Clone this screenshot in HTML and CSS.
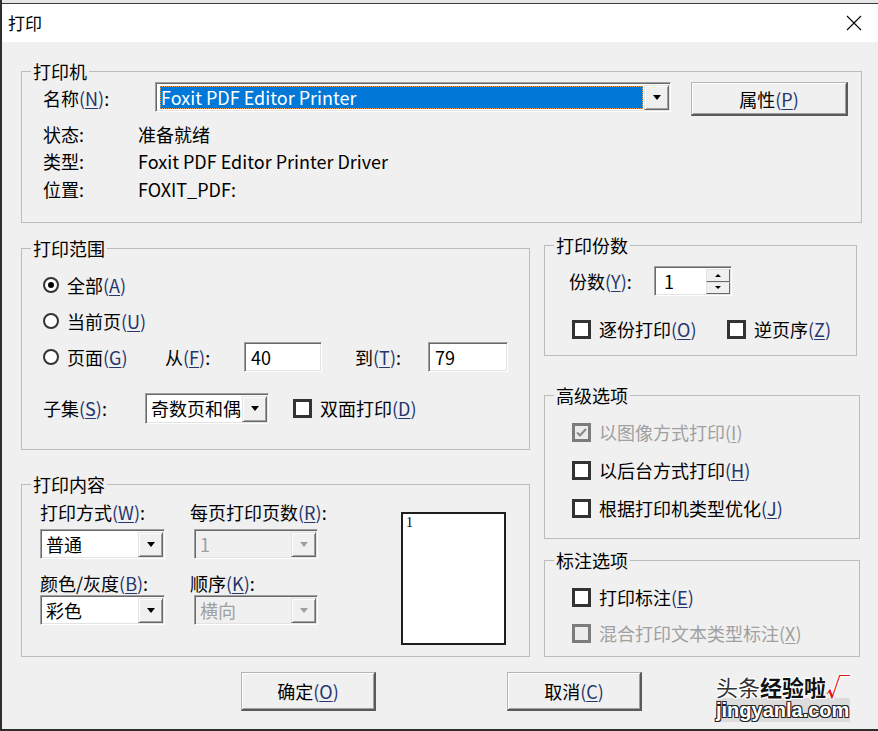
FILE: index.html
```html
<!DOCTYPE html>
<html lang="zh-CN">
<head>
    <meta charset="UTF-8">
    <title>打印</title>
    <link rel="stylesheet" href="styles.css">
</head>
<body>
<div class="window">
    <div class="top-strip"></div>
    <div class="title-bar">
        <span class="title">打印</span>
        <svg class="close" width="16" height="16" viewBox="0 0 16 16"><path d="M1 1L15 15M15 1L1 15" stroke="#000" stroke-width="1.1" fill="none"/></svg>
    </div>

    <div class="dialog">
        <fieldset class="group printer-group">
            <legend>打印机</legend>
            <div class="printer-body">
                <div class="name-row">
                    <span class="name-label">名称<span class="key">(<u>N</u>)</span>:</span>
                    <div class="combo printer-combo">
                        <span class="combo-value selected">Foxit PDF Editor Printer</span>
                        <span class="drop-btn"><i class="arrow"></i></span>
                    </div>
                    <button class="btn props-btn">属性<span class="key">(<u>P</u>)</span></button>
                </div>
                <div class="info">
                    <span>状态:</span><span>准备就绪</span>
                    <span>类型:</span><span>Foxit PDF Editor Printer Driver</span>
                    <span>位置:</span><span>FOXIT_PDF:</span>
                </div>
            </div>
        </fieldset>

        <div class="middle">
            <div class="left-col">
                <fieldset class="group range-group">
                    <legend>打印范围</legend>
                    <div class="range-body">
                        <div class="opt-row">
                            <span class="radio checked"></span>
                            <span>全部<span class="key">(<u>A</u>)</span></span>
                        </div>
                        <div class="opt-row">
                            <span class="radio"></span>
                            <span>当前页<span class="key">(<u>U</u>)</span></span>
                        </div>
                        <div class="opt-row pages-row">
                            <span class="pages-opt">
                                <span class="radio"></span>
                                <span>页面<span class="key">(<u>G</u>)</span></span>
                            </span>
                            <span class="from-label">从<span class="key">(<u>F</u>)</span>:</span>
                            <span class="text-box from-box">40</span>
                            <span class="to-label">到<span class="key">(<u>T</u>)</span>:</span>
                            <span class="text-box to-box">79</span>
                        </div>
                        <div class="subset-row">
                            <span class="subset-label">子集<span class="key">(<u>S</u>)</span>:</span>
                            <div class="combo subset-combo">
                                <span class="combo-value">奇数页和偶</span>
                                <span class="drop-btn"><i class="arrow"></i></span>
                            </div>
                            <span class="check-item duplex">
                                <span class="check"></span>
                                <span>双面打印<span class="key">(<u>D</u>)</span></span>
                            </span>
                        </div>
                    </div>
                </fieldset>

                <fieldset class="group content-group">
                    <legend>打印内容</legend>
                    <div class="content-body">
                        <div class="field-col mode-col">
                            <span class="field-label">打印方式<span class="key">(<u>W</u>)</span>:</span>
                            <div class="combo field-combo">
                                <span class="combo-value">普通</span>
                                <span class="drop-btn"><i class="arrow"></i></span>
                            </div>
                            <span class="field-label second">颜色/灰度<span class="key">(<u>B</u>)</span>:</span>
                            <div class="combo field-combo second">
                                <span class="combo-value">彩色</span>
                                <span class="drop-btn"><i class="arrow"></i></span>
                            </div>
                        </div>
                        <div class="field-col pages-col">
                            <span class="field-label">每页打印页数<span class="key">(<u>R</u>)</span>:</span>
                            <div class="combo field-combo disabled">
                                <span class="combo-value">1</span>
                                <span class="drop-btn"><i class="arrow"></i></span>
                            </div>
                            <span class="field-label second">顺序<span class="key">(<u>K</u>)</span>:</span>
                            <div class="combo field-combo second disabled">
                                <span class="combo-value">横向</span>
                                <span class="drop-btn"><i class="arrow"></i></span>
                            </div>
                        </div>
                        <div class="preview">1</div>
                    </div>
                </fieldset>
            </div>

            <div class="right-col">
                <fieldset class="group copies-group">
                    <legend>打印份数</legend>
                    <div class="copies-body">
                        <div class="copies-row">
                            <span class="copies-label">份数<span class="key">(<u>Y</u>)</span>:</span>
                            <div class="spinner">
                                <span class="spin-value">1</span>
                                <span class="spin-btns">
                                    <span class="spin-btn"><i class="arrow small up"></i></span>
                                    <span class="spin-btn"><i class="arrow small"></i></span>
                                </span>
                            </div>
                        </div>
                        <div class="copies-checks">
                            <span class="check-item collate">
                                <span class="check"></span>
                                <span>逐份打印<span class="key">(<u>O</u>)</span></span>
                            </span>
                            <span class="check-item">
                                <span class="check"></span>
                                <span>逆页序<span class="key">(<u>Z</u>)</span></span>
                            </span>
                        </div>
                    </div>
                </fieldset>

                <fieldset class="group advanced-group">
                    <legend>高级选项</legend>
                    <div class="list-body advanced-body">
                        <div class="check-item disabled">
                            <span class="check">
                                <svg width="13" height="13" viewBox="0 0 13 13"><path d="M2 6.5L5 9.5L11 3" stroke="#8a8a8a" stroke-width="2.2" fill="none"/></svg>
                            </span>
                            <span>以图像方式打印<span class="key">(<u>I</u>)</span></span>
                        </div>
                        <div class="check-item">
                            <span class="check"></span>
                            <span>以后台方式打印<span class="key">(<u>H</u>)</span></span>
                        </div>
                        <div class="check-item">
                            <span class="check"></span>
                            <span>根据打印机类型优化<span class="key">(<u>J</u>)</span></span>
                        </div>
                    </div>
                </fieldset>

                <fieldset class="group notes-group">
                    <legend>标注选项</legend>
                    <div class="list-body notes-body">
                        <div class="check-item">
                            <span class="check"></span>
                            <span>打印标注<span class="key">(<u>E</u>)</span></span>
                        </div>
                        <div class="check-item disabled">
                            <span class="check"></span>
                            <span>混合打印文本类型标注<span class="key">(<u>X</u>)</span></span>
                        </div>
                    </div>
                </fieldset>
            </div>
        </div>

        <div class="actions">
            <button class="btn action-btn">确定<span class="key">(<u>O</u>)</span></button>
            <button class="btn action-btn">取消<span class="key">(<u>C</u>)</span></button>
        </div>
    </div>

    <!-- watermark over the corner -->
    <div class="watermark">
        <div class="wm-top"><span class="wm-light">头条</span>经验啦<span class="wm-tick">√</span></div>
        <div class="wm-site">jingyanla.com</div>
    </div>
</div>
</body>
</html>
```

FILE: styles.css
```css
* {
    box-sizing: border-box;
    margin: 0;
    padding: 0;
}

body {
    width: 878px;
    height: 731px;
    overflow: hidden;
    background: #f0f0f0;
    font-family: "Noto Sans CJK SC", sans-serif;
    font-size: 18px;
    line-height: 24px;
    color: #000;
}

button {
    font: inherit;
    color: inherit;
}

u {
    text-underline-offset: 2px;
}

.key {
    color: #26366e;
}

.window {
    position: relative;
    height: 731px;
    border-left: 2px solid #2d2d2d;
    border-bottom: 2px solid #2d2d2d;
}

.top-strip {
    height: 4px;
    background: #e6e6e6;
    border-bottom: 1px solid #3a3a3a;
}

.title-bar {
    height: 38px;
    background: #fff;
    display: flex;
    align-items: center;
    justify-content: space-between;
    padding: 0 16px 0 6px;
}

.title {
    font-size: 17px;
}

.dialog {
    padding: 17px 0 0 19px;
}

/* group boxes */
.group {
    border: 1px solid #bcbcbc;
    padding: 0;
    margin: 0;
    min-width: 0;
}

.group legend {
    margin-left: 9px;
    padding: 0 2px;
    line-height: 24px;
}

.printer-group {
    width: 841px;
    height: 164px;
}

.printer-body {
    padding-left: 21px;
}

.name-row {
    display: flex;
    align-items: flex-start;
    margin-top: -1px;
}

.name-label {
    width: 112px;
    margin-top: 4px;
}

.info {
    display: grid;
    grid-template-columns: 95px auto;
    grid-auto-rows: 27.5px;
    align-items: center;
    margin-top: 4px;
}

/* combo boxes */
.combo {
    display: flex;
    height: 30px;
    background: #fff;
    border: 1px solid;
    border-color: #a0a0a0 #fff #fff #a0a0a0;
    box-shadow: inset 1px 1px 0 #696969, inset -1px -1px 0 #e3e3e3;
    padding: 2px 1px 1px 2px;
}

.combo-value {
    flex: 1;
    padding-left: 3px;
    line-height: 25px;
    white-space: nowrap;
}

.combo-value.selected {
    margin: 1px 1px 1px 2px;
    padding-left: 1px;
    line-height: 23px;
    background: #0078d7;
    color: #fff;
    outline: 1px dotted #f0a050;
    outline-offset: -1px;
}

.drop-btn {
    width: 25px;
    flex-shrink: 0;
    display: flex;
    align-items: center;
    justify-content: center;
    background: #f0f0f0;
    border: 1px solid;
    border-color: #e3e3e3 #696969 #696969 #e3e3e3;
    box-shadow: inset 1px 1px 0 #fff, inset -1px -1px 0 #a0a0a0;
}

.arrow {
    width: 0;
    height: 0;
    border-left: 4.5px solid transparent;
    border-right: 4.5px solid transparent;
    border-top: 5px solid #000;
}

.arrow.small {
    border-left-width: 3px;
    border-right-width: 3px;
    border-top-width: 3px;
}

.arrow.up {
    border-top: 0;
    border-bottom: 3px solid #000;
}

.combo.disabled {
    background: #f0f0f0;
    color: #a0a0a0;
}

.combo.disabled .arrow {
    border-top-color: #a0a0a0;
}

.printer-combo {
    width: 516px;
}

/* buttons */
.btn {
    background: #f0f0f0;
    border: 1px solid;
    border-width: 1px 2px 2px 1px;
    border-color: #b4b4b4 #5a5a5a #5a5a5a #b4b4b4;
    box-shadow: inset 1px 1px 0 #fff, inset -1px -1px 0 #a0a0a0;
    cursor: pointer;
}

.props-btn {
    width: 157px;
    height: 34px;
    margin-left: 20px;
}

/* middle area */
.middle {
    display: flex;
    gap: 14px;
    margin-top: 10px;
}

.left-col {
    width: 509px;
    padding-top: 3px;
    display: flex;
    flex-direction: column;
    gap: 22px;
}

.right-col {
    width: 316px;
    display: flex;
    flex-direction: column;
}

.range-group {
    height: 214px;
}

.range-body {
    padding: 7px 0 0 21px;
}

.opt-row {
    display: flex;
    align-items: center;
    height: 36px;
}

.pages-row {
    height: 35px;
}

.radio {
    width: 16px;
    height: 16px;
    margin-right: 8px;
    border-radius: 50%;
    border: 2px solid #333;
    background: #fff;
    display: flex;
    align-items: center;
    justify-content: center;
}

.radio.checked::after {
    content: "";
    width: 6px;
    height: 6px;
    border-radius: 50%;
    background: #000;
}

.pages-opt {
    width: 122px;
    display: flex;
    align-items: center;
}

.from-label {
    width: 79px;
}

.to-label {
    width: 73px;
    margin-left: 33px;
}

.text-box {
    height: 30px;
    background: #fff;
    border: 1px solid;
    border-color: #a0a0a0 #fff #fff #a0a0a0;
    box-shadow: inset 1px 1px 0 #696969, inset -1px -1px 0 #e3e3e3;
    padding-left: 6px;
    line-height: 28px;
}

.from-box {
    width: 78px;
}

.to-box {
    width: 80px;
}

.subset-row {
    display: flex;
    align-items: center;
    height: 34px;
    margin-top: 17px;
}

.subset-label {
    width: 102px;
}

.subset-combo {
    width: 124px;
    height: 31px;
}

.duplex {
    margin-left: 24px;
}

/* checkboxes */
.check-item {
    display: flex;
    align-items: center;
    white-space: nowrap;
}

.check {
    width: 19px;
    height: 19px;
    margin-right: 8px;
    border: 3px solid #333;
    background: #fff;
    display: flex;
    align-items: center;
    justify-content: center;
}

.check-item.disabled {
    color: #a0a0a0;
}

.check-item.disabled .key {
    color: #a0a0a0;
}

.check-item.disabled .check {
    border-color: #7c7c7c;
    background: #ececec;
}

/* print content */
.content-group {
    height: 185px;
}

.content-body {
    display: flex;
    padding-left: 18px;
}

.field-col {
    display: flex;
    flex-direction: column;
    align-items: flex-start;
    padding-top: 4px;
}

.field-label {
    white-space: nowrap;
}

.mode-col {
    width: 150px;
}

.pages-col {
    width: 128px;
}

.field-label.second {
    margin-top: 12px;
}

.field-combo {
    width: 125px;
    margin-top: 5px;
}

.field-combo.second {
    margin-top: 0;
}

.pages-col .field-combo {
    width: 124px;
    margin-left: 4px;
}

.preview {
    width: 105px;
    height: 133px;
    margin: 16px 0 0 83px;
    background: #fff;
    border: 2px solid #1e1e1e;
    padding: 0 3px;
    font-family: "Liberation Serif", serif;
    font-size: 14px;
    line-height: 18px;
}

/* right column groups */
.copies-group {
    width: 313px;
    height: 123px;
}

.copies-body {
    padding: 9px 0 0 24px;
}

.copies-row {
    display: flex;
    align-items: center;
}

.copies-label {
    width: 85px;
}

.spinner {
    width: 78px;
    height: 30px;
    display: flex;
    background: #fff;
    border: 1px solid;
    border-color: #a0a0a0 #fff #fff #a0a0a0;
    box-shadow: inset 1px 1px 0 #696969, inset -1px -1px 0 #e3e3e3;
    padding: 2px 1px 1px 2px;
}

.spin-value {
    flex: 1;
    padding-left: 7px;
    line-height: 25px;
}

.spin-btns {
    width: 24px;
    display: flex;
    flex-direction: column;
}

.spin-btn {
    flex: 1;
    display: flex;
    align-items: center;
    justify-content: center;
    background: #f0f0f0;
    border: 1px solid;
    border-color: #e3e3e3 #696969 #696969 #e3e3e3;
}

.copies-checks {
    display: flex;
    align-items: center;
    height: 24px;
    margin: 21px 0 0 3px;
}

.collate {
    width: 155px;
}

.advanced-group {
    height: 156px;
    margin-top: 27px;
}

.notes-group {
    height: 109px;
    margin-top: 9px;
}

.list-body {
    padding-left: 27px;
}

.advanced-body {
    padding-top: 6px;
}

.advanced-body .check-item {
    height: 38px;
}

.notes-body {
    padding-top: 7px;
}

.notes-body .check-item {
    height: 36px;
}

/* bottom buttons */
.actions {
    display: flex;
    gap: 131px;
    margin-top: 15px;
    padding-left: 220px;
}

.action-btn {
    width: 135px;
    height: 39px;
}

/* watermark */
.watermark {
    position: absolute;
    left: 714px;
    top: 674px;
    font-weight: bold;
    line-height: 24px;
    pointer-events: none;
}

.wm-top {
    font-size: 22px;
    color: #111;
    text-shadow: 1px 1px 0 #fff, -1px -1px 0 #fff, 1px -1px 0 #fff, -1px 1px 0 #fff;
}

.wm-light {
    font-weight: normal;
    color: #333;
}

.wm-tick {
    color: #e01010;
    font-size: 24px;
}

.wm-site {
    font-family: "Liberation Sans", sans-serif;
    font-size: 20px;
    color: #fff;
    background: rgba(200, 200, 200, 0.5);
    text-shadow: 1px 1px 0 #222, -1px -1px 0 #222, 1px -1px 0 #222, -1px 1px 0 #222;
}
```
